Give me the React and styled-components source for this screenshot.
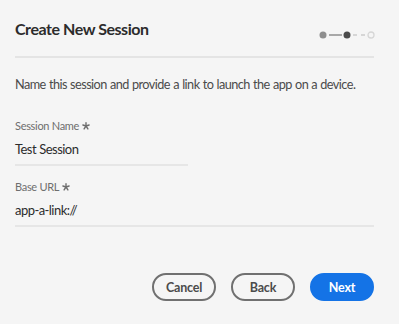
import React from "react";
import styled, { createGlobalStyle } from "styled-components";

const GlobalStyle = createGlobalStyle`
  html, body {
    margin: 0;
    padding: 0;
    background: #f5f5f5;
  }
  body {
    font-family: Lato, "Noto Sans", sans-serif;
    color: #2c2c2c;
  }
`;

const Dialog = styled.div`
  width: 399px;
  height: 324px;
  box-sizing: border-box;
  padding: 19px 25px 0 15px;
  display: flex;
  flex-direction: column;
`;

const Header = styled.div`
  display: flex;
  justify-content: space-between;
  align-items: flex-start;
  height: 37px;
  border-bottom: 2px solid #e4e4e4;
`;

const Title = styled.h2`
  margin: 0;
  font-size: 16px;
  font-weight: 700;
  letter-spacing: -0.45px;
  line-height: 20px;
  color: #2c2c2c;
`;

const Stepper = styled.svg`
  margin-top: 11px;
  margin-right: -3px;
`;

const Intro = styled.p`
  margin: 16px 0 0;
  font-size: 12.7px;
  letter-spacing: -0.55px;
  word-spacing: 0.5px;
  line-height: 20px;
  color: #4b4b4b;
  white-space: nowrap;
`;

const Field = styled.div`
  display: flex;
  flex-direction: column;
  width: ${({ $wide }) => ($wide ? "100%" : "173px")};
  margin-top: ${({ $first }) => ($first ? "24px" : "13px")};
`;

const Label = styled.label`
  display: flex;
  align-items: center;
  gap: 3px;
  font-size: 11px;
  letter-spacing: -0.3px;
  line-height: 16px;
  color: #6e6e6e;
`;

const Value = styled.div`
  margin-top: 5px;
  font-size: 13px;
  letter-spacing: -0.55px;
  word-spacing: 0.5px;
  line-height: 20px;
  color: #2c2c2c;
  padding-bottom: 5px;
  border-bottom: 2px solid #e6e6e6;
`;

const Footer = styled.div`
  display: flex;
  justify-content: flex-end;
  gap: 15px;
  margin-top: 46px;
`;

const Button = styled.button`
  box-sizing: border-box;
  height: 28px;
  width: 64px;
  padding: 0;
  border-radius: 14px;
  font-family: inherit;
  font-size: 12.5px;
  letter-spacing: -0.2px;
  font-weight: 700;
  border: 2px solid ${({ $primary }) => ($primary ? "#1473e6" : "#707070")};
  background: ${({ $primary }) => ($primary ? "#1473e6" : "transparent")};
  color: ${({ $primary }) => ($primary ? "#ffffff" : "#4b4b4b")};
  cursor: pointer;
`;

const Asterisk = () => (
  <svg width="8" height="8" viewBox="0 0 8 8">
    <g stroke="#6e6e6e" strokeWidth="1.4" strokeLinecap="round">
      <line x1="4" y1="0.8" x2="4" y2="4" />
      <line x1="4" y1="4" x2="0.9" y2="3" />
      <line x1="4" y1="4" x2="7.1" y2="3" />
      <line x1="4" y1="4" x2="2.1" y2="6.9" />
      <line x1="4" y1="4" x2="5.9" y2="6.9" />
    </g>
  </svg>
);

const Steps = () => (
  <Stepper width="60" height="10" viewBox="0 0 60 10">
    <circle cx="6" cy="5" r="3.5" fill="#8e8e8e" />
    <line x1="12" y1="5" x2="25" y2="5" stroke="#a8a8a8" strokeWidth="2" />
    <circle cx="30" cy="5" r="3.5" fill="#4b4b4b" />
    <line x1="36" y1="5" x2="40" y2="5" stroke="#d6d6d6" strokeWidth="2" />
    <line x1="44" y1="5" x2="48" y2="5" stroke="#d6d6d6" strokeWidth="2" />
    <circle cx="54" cy="5" r="3" fill="none" stroke="#d6d6d6" strokeWidth="1.3" />
  </Stepper>
);

export default function App() {
  return (
    <>
      <GlobalStyle />
      <Dialog>
        <Header>
          <Title>Create New Session</Title>
          <Steps />
        </Header>
        <Intro>Name this session and provide a link to launch the app on a device.</Intro>
        <Field $first>
          <Label>
            Session Name <Asterisk />
          </Label>
          <Value>Test Session</Value>
        </Field>
        <Field $wide>
          <Label>
            Base URL <Asterisk />
          </Label>
          <Value>app-a-link://</Value>
        </Field>
        <Footer>
          <Button>Cancel</Button>
          <Button>Back</Button>
          <Button $primary>Next</Button>
        </Footer>
      </Dialog>
    </>
  );
}
